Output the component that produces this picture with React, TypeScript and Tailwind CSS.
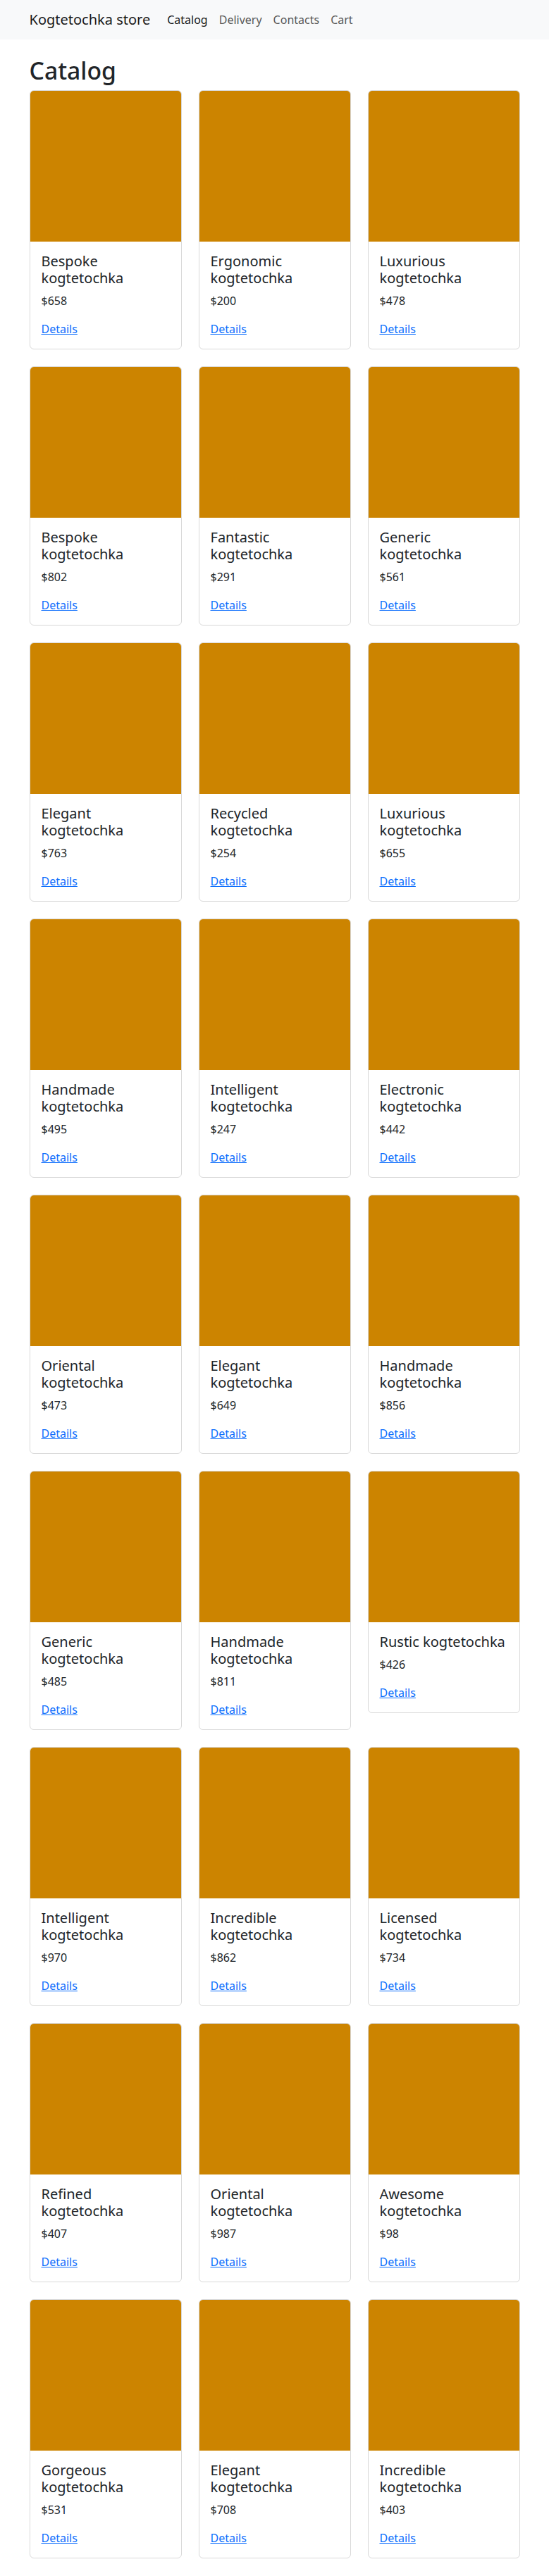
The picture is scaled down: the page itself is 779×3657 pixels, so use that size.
import React from "react";

type Product = { id: number; name: string; price: number };

const products: Product[] = [
  { id: 1, name: "Bespoke kogtetochka", price: 658 },
  { id: 2, name: "Ergonomic kogtetochka", price: 200 },
  { id: 3, name: "Luxurious kogtetochka", price: 478 },
  { id: 4, name: "Bespoke kogtetochka", price: 802 },
  { id: 5, name: "Fantastic kogtetochka", price: 291 },
  { id: 6, name: "Generic kogtetochka", price: 561 },
  { id: 7, name: "Elegant kogtetochka", price: 763 },
  { id: 8, name: "Recycled kogtetochka", price: 254 },
  { id: 9, name: "Luxurious kogtetochka", price: 655 },
  { id: 10, name: "Handmade kogtetochka", price: 495 },
  { id: 11, name: "Intelligent kogtetochka", price: 247 },
  { id: 12, name: "Electronic kogtetochka", price: 442 },
  { id: 13, name: "Oriental kogtetochka", price: 473 },
  { id: 14, name: "Elegant kogtetochka", price: 649 },
  { id: 15, name: "Handmade kogtetochka", price: 856 },
  { id: 16, name: "Generic kogtetochka", price: 485 },
  { id: 17, name: "Handmade kogtetochka", price: 811 },
  { id: 18, name: "Rustic kogtetochka", price: 426 },
  { id: 19, name: "Intelligent kogtetochka", price: 970 },
  { id: 20, name: "Incredible kogtetochka", price: 862 },
  { id: 21, name: "Licensed kogtetochka", price: 734 },
  { id: 22, name: "Refined kogtetochka", price: 407 },
  { id: 23, name: "Oriental kogtetochka", price: 987 },
  { id: 24, name: "Awesome kogtetochka", price: 98 },
  { id: 25, name: "Gorgeous kogtetochka", price: 531 },
  { id: 26, name: "Elegant kogtetochka", price: 708 },
  { id: 27, name: "Incredible kogtetochka", price: 403 },
];

const navLinks = [
  { label: "Catalog", active: true },
  { label: "Delivery", active: false },
  { label: "Contacts", active: false },
  { label: "Cart", active: false },
];

function ProductCard({ product }: { product: Product }) {
  return (
    <div className="flex flex-col overflow-hidden rounded-[6px] border border-[#d9d9d9] bg-white">
      <div className="aspect-square w-full bg-[#cc8400]" />
      <div className="p-4">
        <h5 className="mb-2 text-[20px] font-normal leading-[1.2]">
          {product.name}
        </h5>
        <p className="mb-4 text-[16px] leading-[1.5]">${product.price}</p>
        <a href="#" className="text-[16px] leading-[1.5] text-[#0d6efd] underline">
          Details
        </a>
      </div>
    </div>
  );
}

export default function App() {
  return (
    <div className="min-h-screen bg-white font-['Noto_Sans',sans-serif] text-[#212529]">
      <nav className="bg-[#f8f9fa] py-2">
        <div className="mx-auto flex w-[720px] items-center px-3">
          <a href="#" className="mr-4 py-[5px] text-[20px] leading-[30px] text-[#1a1a1a]">
            Kogtetochka store
          </a>
          <ul className="flex">
            {navLinks.map((link) => (
              <li key={link.label}>
                <a
                  href="#"
                  className={
                    link.active
                      ? "block px-2 py-2 text-[16px] leading-[24px] text-[#1a1a1a]"
                      : "block px-2 py-2 text-[16px] leading-[24px] text-[#595959]"
                  }
                >
                  {link.label}
                </a>
              </li>
            ))}
          </ul>
        </div>
      </nav>

      <main className="mx-auto mt-6 w-[720px] px-3 pb-6">
        <h1 className="mb-2 text-[33.7px] font-medium leading-[1.2]">Catalog</h1>
        <div className="grid grid-cols-3 items-start gap-x-6 gap-y-6">
          {products.map((p) => (
            <ProductCard key={p.id} product={p} />
          ))}
        </div>
      </main>
    </div>
  );
}
